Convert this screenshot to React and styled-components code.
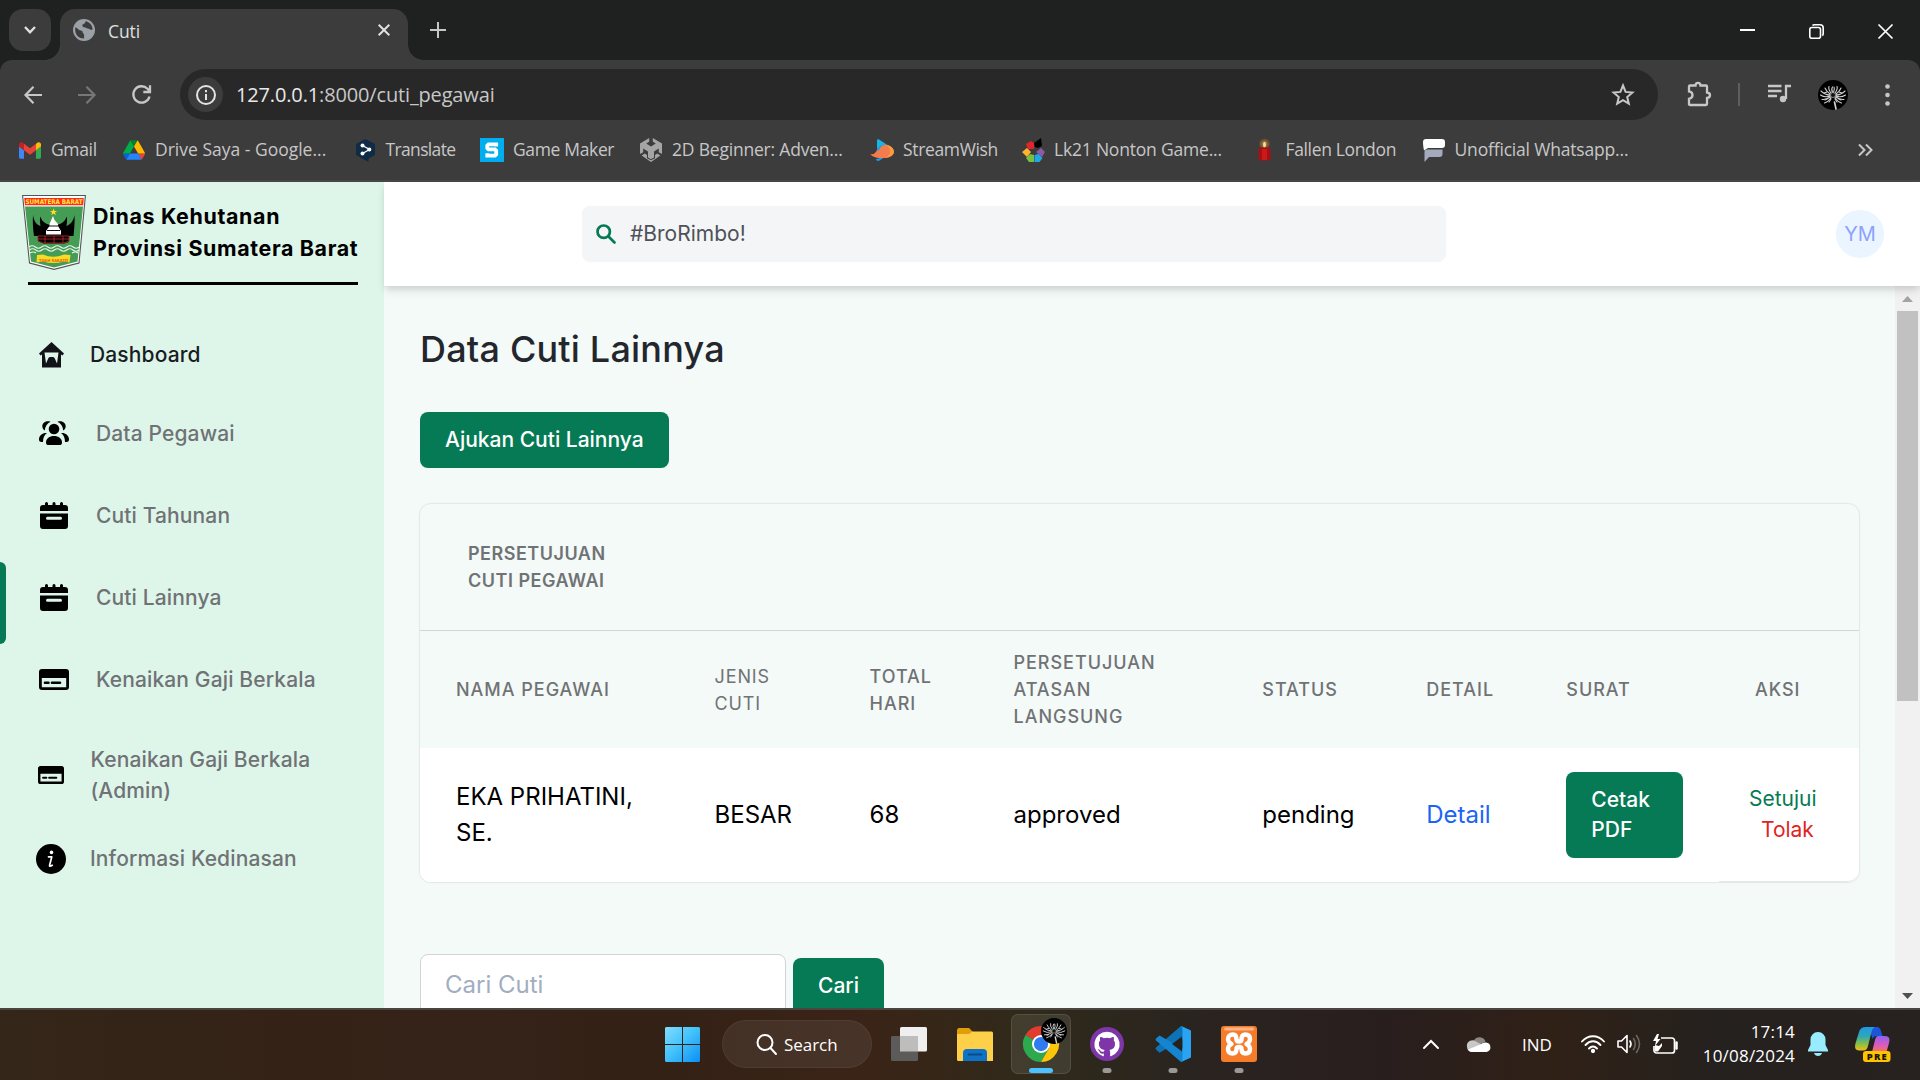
import React from "react";
import styled, { createGlobalStyle, css } from "styled-components";

const Global = createGlobalStyle`
  * { box-sizing: border-box; }
  body { margin: 0; background: #1f2120; overflow: hidden; font-family: Inter, "Liberation Sans", sans-serif; }
  svg { display: block; flex: none; overflow: visible; }
  a { text-decoration: none; color: inherit; }
  p, h1 { margin: 0; }
`;

const system = css`font-family: "Open Sans", "Noto Sans", sans-serif;`;

const Screen = styled.div`
  width: 1920px; height: 1080px; display: flex; flex-direction: column; overflow: hidden;
`;

/* ---------- Browser ---------- */
const TabStrip = styled.div`
  height: 60px; background: #1f2120; display: flex; align-items: flex-end; padding-left: 9px; flex: none;
`;
const TabSearch = styled.div`
  width: 42px; height: 42px; border-radius: 14px; background: #3c3c3c; margin-bottom: 9px;
  display: flex; align-items: center; justify-content: center;
`;
const Tab = styled.div`
  position: relative; margin-left: 9px; width: 348px; height: 51px; background: #3c3c3c;
  border-radius: 15px 15px 0 0; display: flex; align-items: center; padding: 0 18px 9px 13px;
  &::before, &::after { content: ""; position: absolute; bottom: 0; width: 15px; height: 15px; }
  &::before { left: -15px; background: radial-gradient(circle at 0 0, transparent 14.5px, #3c3c3c 15px); }
  &::after { right: -15px; background: radial-gradient(circle at 100% 0, transparent 14.5px, #3c3c3c 15px); }
`;
const TabTitle = styled.span`
  ${system} font-size: 17.5px; letter-spacing: -0.1px; color: #dfe0e0; margin-left: 13px; flex: 1; padding-top: 2px;
`;
const NewTab = styled.div`
  width: 60px; height: 60px; display: flex; align-items: center; justify-content: center; flex: none;
`;
const WindowControls = styled.div`
  margin-left: auto; display: flex; height: 58px;
`;
const WindowButton = styled.div`
  width: 69px; display: flex; align-items: center; justify-content: center;
`;
const Chrome = styled.div`
  flex: none; height: 122px; background: #3c3c3c; border-radius: 12px 12px 0 0;
  border-bottom: 2px solid #474747; display: flex; flex-direction: column;
`;
const Toolbar = styled.div`
  height: 60px; padding-top: 9px; display: flex; align-items: center;
`;
const ToolSlot = styled.div`
  width: ${(p) => p.$w}px; height: 50px; display: flex; align-items: center; justify-content: center; flex: none;
`;
const Omnibox = styled.div`
  width: 1478px; height: 51px; border-radius: 26px; background: #282828; display: flex; align-items: center;
  padding: 0 24px 0 8px; flex: none;
`;
const SiteInfo = styled.div`
  width: 35px; height: 35px; border-radius: 50%; background: #3c3c3c; display: flex; align-items: center; justify-content: center;
`;
const Url = styled.span`
  ${system} font-size: 20px; letter-spacing: -0.15px; color: #c7c7c7; margin-left: 13px; flex: 1;
  b { font-weight: 400; color: #e9e9e9; }
`;
const Bookmarks = styled.div`
  height: 60px; display: flex; align-items: center; padding-left: 19px;
`;
const Bookmark = styled.div`
  width: ${(p) => p.$w}px; display: flex; align-items: center; gap: ${(p) => p.$gap}px; flex: none;
  ${system} font-size: 17.5px; letter-spacing: ${(p) => p.$ls || 0}px; color: #c7c7c7; white-space: nowrap;
`;
const BookmarkLabel = styled.span` padding-bottom: 2px; `;
const MoreBookmarks = styled.div` margin-left: auto; margin-right: 47px; `;

/* ---------- Page ---------- */
const Page = styled.div` flex: none; height: 826px; display: flex; background: #f4faf8; `;
const Sidebar = styled.aside` width: 384px; background: #def6ea; flex: none; overflow: hidden; `;
const Brand = styled.div`
  height: 103px; padding: 13px 0 0 22px; display: flex;
`;
const BrandName = styled.div`
  margin: 5px 0 0 7px; font-size: 21.4px; line-height: 32px; letter-spacing: 0.65px; font-weight: 700; color: #000; white-space: nowrap;
  span { display: block; }
`;
const Rule = styled.div` height: 3px; width: 330px; margin: -3px 0 0 28px; background: #000; `;
const Nav = styled.nav` padding-top: 32px; display: flex; flex-direction: column; `;
const NavItem = styled.a`
  position: relative; display: flex; align-items: center; height: ${(p) => p.$h}px;
  padding-left: 36px; font-size: 21px; line-height: 31px; font-weight: 500; letter-spacing: 0.13px;
  color: ${(p) => p.$dark ? "#1a1c23" : "#707275"};
`;
const NavIcon = styled.span` width: ${(p) => p.$w}px; display: flex; justify-content: flex-start; padding-left: ${(p) => p.$pad || 0}px; flex: none; `;
const NavLabel = styled.span` width: 240px; `;
const ActiveBar = styled.span`
  position: absolute; left: 0; top: 6px; width: 6px; height: 82px; background: #057a55; border-radius: 0 6px 6px 0;
`;
const Main = styled.div` flex: 1; display: flex; flex-direction: column; min-width: 0; `;
const Header = styled.header`
  height: 104px; background: #fff; flex: none; display: flex; align-items: center; padding: 0 36px 0 198px;
  justify-content: space-between; z-index: 1; box-shadow: 0 6px 9px -1px rgba(0,0,0,.1), 0 3px 6px -1px rgba(0,0,0,.08);
`;
const SearchBox = styled.div`
  width: 864px; height: 56px; border-radius: 8px; background: #f4f5f7; display: flex; align-items: center; padding: 0 14px; gap: 14px;
  font-size: 21px; color: #4f5158;
`;
const SearchText = styled.span` padding-bottom: 1px; `;
const Initials = styled.div`
  width: 48px; height: 48px; border-radius: 50%; background: #ebf5ff; color: #8da2fb; font-size: 20px;
  display: flex; align-items: center; justify-content: center;
`;
const Body = styled.div` flex: 1; display: flex; min-height: 0; `;
const Content = styled.main`
  width: 1511px; padding: 36px 34px 0 36px; overflow: hidden; flex: none;
`;
const Scrollbar = styled.div`
  flex: 1; background: #f1f1f1; display: flex; flex-direction: column; align-items: center;
`;
const ScrollEnd = styled.div` height: 25px; display: flex; align-items: center; justify-content: center; flex: none; `;
const Thumb = styled.div` width: 21px; height: 390px; background: #c1c1c1; `;
const Track = styled.div` flex: 1; `;
const Title = styled.h1` font-size: 36px; line-height: 54px; font-weight: 500; letter-spacing: 0.2px; color: #24262d; `;
const Button = styled.button`
  font: 500 21px/30px Inter, sans-serif; color: #fff; background: #057a55; border: 0; border-radius: 8px;
  padding: 13px 25px; text-align: left; display: block; width: ${(p) => p.$w}px; flex: none; white-space: nowrap;
`;
const Toolrow = styled.div` margin-top: 36px; `;
const Card = styled.section`
  margin: 35px 0 0 -1px; width: 1441px; height: 380px; border: 1px solid #e4eae9; border-radius: 12px; overflow: hidden;
  box-shadow: 0 0 1px rgba(0,0,0,.08);
`;
const Caption = styled.div`
  height: 127px; border-bottom: 1px solid #d0d5d5; padding: 36px 48px; font-size: 18px; line-height: 27px; font-weight: 600;
  letter-spacing: 0.5px; color: #707275;
`;
const Row = styled.div`
  display: grid; grid-template-columns: 258.5px 155px 144px 248.8px 164px 140px 188.7px 1fr; height: ${(p) => p.$h}px;
  align-items: center; background: ${(p) => p.$bg || "transparent"};
`;
const HeadCell = styled.div`
  padding-left: 36px; font-size: 18px; line-height: 27px; letter-spacing: ${(p) => p.$light ? 0.9 : 0.98}px; color: #707275;
  font-weight: ${(p) => p.$light ? 400 : 500};
  span { display: block; }
`;
const Cell = styled.div`
  padding-left: 36px; font-size: 24px; line-height: 36px; color: ${(p) => p.$blue ? "#1c64f2" : "#000"};
`;
const ActionCell = styled.div`
  align-self: stretch; border-bottom: 1px solid #e4e7e7; border-radius: 0 0 12px 0; padding: 35px 0 0 30px; font-size: 21px; line-height: 31px;
`;
const Action = styled.a` display: block; color: ${(p) => p.$red ? "#e02424" : "#057a55"}; padding-left: ${(p) => p.$red ? 12 : 0}px; `;
const Finder = styled.div` display: flex; margin-top: 71px; gap: 7px; `;
const Field = styled.div`
  width: 366px; height: 62px; border: 1px solid #d0d4d8; border-radius: 8px; background: #fff; color: #a0aec0;
  font-size: 24px; line-height: 60px; padding-left: 24px;
`;
const FindButton = styled(Button)` margin-top: 4px; padding-top: 12px; padding-bottom: 14px; `;

/* ---------- Taskbar ---------- */
const Taskbar = styled.div`
  height: 72px; flex: none; border-top: 2px solid #4a4541; padding-bottom: 2px; display: flex; align-items: center; color: #fff; ${system}
  background: linear-gradient(90deg, #342618 0%, #342216 15%, #35231a 25%, #332115 33%, #3a2417 45%, #2f2a1a 54%, #2a2420 62%, #291e1e 72%, #302117 81%, #25211e 89%, #27211f 100%);
`;
const TaskSlot = styled.div`
  position: relative; width: ${(p) => p.$w}px; height: 60px; display: flex; align-items: center; justify-content: center; flex: none;
  border-radius: 7px;
  ${(p) => p.$on && css`background: rgba(255,255,255,.09); border: 1px solid rgba(255,255,255,.1);`}
`;
const Indicator = styled.span`
  position: absolute; bottom: ${(p) => p.$on ? 0 : 1}px; left: 50%; transform: translateX(-50%); height: 5px; border-radius: 3px;
  width: ${(p) => p.$on ? 24 : 9}px; background: ${(p) => p.$on ? "#4cc2ff" : "#9b9895"};
`;
const Badge = styled.span` position: absolute; right: 3px; top: 3px; `;
const SearchPill = styled.div`
  width: 150px; height: 48px; border-radius: 24px; background: rgba(255,255,255,.07); border: 1px solid rgba(255,255,255,.05);
  display: flex; align-items: center; padding-left: 33px; gap: 7px; font-size: 17px; letter-spacing: -0.05px; margin-right: 7px;
`;
const Tray = styled.div` margin-left: auto; display: flex; align-items: center; `;
const TrayItem = styled.div`
  width: ${(p) => p.$w}px; display: flex; justify-content: center; align-items: center; font-size: 17px; flex: none;
`;
const CopilotSlot = styled(TrayItem)` padding-right: 3px; `;
const Clock = styled.div`
  width: 102px; text-align: right; font-size: 17px; line-height: 24px; letter-spacing: 0.2px; margin-right: 13px; white-space: nowrap;
`;

/* ---------- Icons ---------- */
const Line = ({ w = 20, h = w, box, color = "#c7c7c7", sw = 2, children, cap = "butt" }) => (
  <svg width={w} height={h} viewBox={box || `0 0 ${w} ${h}`} fill="none" stroke={color} strokeWidth={sw} strokeLinecap={cap}>{children}</svg>
);
const Globe = () => (
  <svg width="22" height="22" viewBox="0 0 22 22">
    <circle cx="11" cy="11" r="11" fill="#9aa0a6" />
    <path d="M2.2 8.5C4 8.6 5 10 6.2 11c1.200.9 3.400.2 3.400 2 0 1.500 1.500 1.500 1.500 3v3.500C6 19.500 2.400 16 2.200 11z" fill="#3c3c3c" />
    <path d="M12.500 2.300c-.3 1.500-.4 2.200-2 2.700-1.300.4-1.300 1.500-.8 2.400.6 1 2.300.5 3.200 1.300 1.200 1 2.600.4 3.900 1.500.9.8 2.200.6 2.900.4C19.300 6 16.400 2.900 12.500 2.300z" fill="#3c3c3c" />
  </svg>
);
const Avatar = ({ size }) => (
  <svg width={size} height={size} viewBox="0 0 30 30">
    <circle cx="15" cy="15" r="15" fill="#000" />
    <g stroke="#cfcfcf" strokeWidth="1.100" fill="none" strokeLinecap="round">
      <path d="M12 15Q7 15 3 11M12 16Q7 18 2.500 15M12.500 17Q8 20 4 19.500M13 18Q10 22 6.500 23M12 14Q8 11 7 8M13 13Q10 9 11 6.500M14.500 12.500Q13 9 14.500 7" />
      <path d="M18 15Q23 15 27 11M18 16Q23 18 27.500 15M17.500 17Q22 20 26 19.500M17 18Q20 22 23.500 23M18 14Q22 11 23 8M17 13Q20 9 19 6.500M15.500 12.500Q17 9 16 7" />
      <path d="M9 12L6 13M21 12L24 13M9 19L7 20M21 19L23 20M13 19L11 22M17 19L19 22" />
      <path d="M16.500 22L18 29" strokeWidth="1.700" />
    </g>
    <circle cx="15" cy="15" r="2.500" fill="#111" stroke="#aaa" strokeWidth=".8" />
  </svg>
);
const Gmail = () => (
  <svg width="22" height="17" viewBox="52 42 88 66">
    <path fill="#4285f4" d="M58 108h14V74L52 59v43c0 3.320 2.690 6 6 6" />
    <path fill="#34a853" d="M120 108h14c3.320 0 6-2.690 6-6V59l-20 15" />
    <path fill="#fbbc04" d="M120 48v26l20-15v-8c0-7.420-8.470-11.650-14.400-7.200" />
    <path fill="#ea4335" d="M72 74V48l24 18 24-18v26L96 92" />
    <path fill="#c5221f" d="M52 51v8l20 15V48l-5.600-4.200c-5.940-4.450-14.400-.22-14.400 7.200" />
  </svg>
);
const Drive = () => (
  <svg width="22" height="20" viewBox="0 0 87.300 78">
    <path fill="#0066da" d="m6.600 66.850 3.850 6.650c.8 1.400 1.950 2.500 3.300 3.300l13.750-23.800H0c0 1.550.4 3.100 1.200 4.500z" />
    <path fill="#00ac47" d="m43.650 25-13.750-23.800c-1.350.8-2.500 1.900-3.300 3.300L1.200 48.500A9 9 0 0 0 0 53h27.500z" />
    <path fill="#ea4335" d="M73.550 76.800c1.350-.8 2.500-1.900 3.300-3.300l1.600-2.750 7.650-13.250c.8-1.400 1.200-2.950 1.200-4.500H59.800l5.850 11.500z" />
    <path fill="#00832d" d="M43.650 25 57.400 1.200C56.050.4 54.500 0 52.900 0H34.400c-1.600 0-3.150.45-4.500 1.200z" />
    <path fill="#2684fc" d="M59.800 53H27.500L13.750 76.800c1.350.8 2.900 1.200 4.500 1.200h50.800c1.600 0 3.150-.45 4.500-1.200z" />
    <path fill="#ffba00" d="m73.400 26.500-12.700-22c-.8-1.400-1.950-2.500-3.300-3.300L43.650 25 59.800 53h27.450c0-1.550-.4-3.100-1.200-4.500z" />
  </svg>
);
const DeepL = () => (
  <svg width="19" height="23" viewBox="0 0 19 23">
    <path d="M9.500 0L19 5v11l-6.500 3.600V23L0 16V5z" fill="#0f2b46" />
    <path d="M6.500 6.500L13.500 10.500L6.500 14.500" stroke="#fff" strokeWidth="1.300" fill="none" />
    <g fill="#fff"><circle cx="6.500" cy="6.500" r="2" /><circle cx="13.300" cy="10.500" r="2" /><circle cx="6.500" cy="14.500" r="2" /></g>
  </svg>
);
const GameMaker = () => (
  <svg width="24" height="24" viewBox="0 0 24 24">
    <rect width="24" height="24" fill="#00adef" />
    <path d="M16.200 8.600V6.300H8.500L7.300 7.500V10.200L8.500 11.400H15L16.200 12.600V16.500L15 17.700H7.300V15.200" fill="none" stroke="#fff" strokeWidth="3.800" strokeLinejoin="miter" />
  </svg>
);
const Unity = () => (
  <svg width="22" height="24" viewBox="0 0 22 24" fill="#a5a5a5">
    <path d="M9.200 0V3.800L6.200 5.600L11 8.400L15.800 5.600L12.800 3.800V0L22 5.400V16L18.800 14.200V10.600L14 13.400V19.600L11 21.200L8 19.600V13.400L3.200 10.600V14.200L0 16V5.400Z" />
    <path d="M1.600 17.400L4.800 15.600L7 17V20.200L11 22.200L15 20.200V17L17.200 15.600L20.400 17.400L11 24Z" />
  </svg>
);
const StreamWish = () => (
  <svg width="24" height="22" viewBox="0 0 24 22">
    <path d="M7 1.500C7 .3 8 0 9 .6L19 7c-4-1-8-1-12 3z" fill="#19b5e6" />
    <path d="M6 20c3-1 8-1 12-4l-8.500 5.400C8 22.300 6.500 22 6 20z" fill="#1a9fe0" />
    <path d="M0 15c4 1 5.500-1 7-4 2-4 6-6 10-5 4 .8 7 4 7 7-.5 4-5 6-10 6-5 .5-11-.5-14-4z" fill="#f47b4d" />
    <path d="M16 6c4 0 8 3 8 7-.5 3-4 5-8 5.500 3-2 4.500-4 4-7-.3-2.500-2-4.500-4-5.500z" fill="#fb9d3c" />
    <path d="M7 11.500C8 6.500 12 5 15.500 6C12 6 10.500 8 9.500 10.500C9 11.500 8 12 7 11.500Z" fill="#19a5e0" />
  </svg>
);
const Lk21 = () => (
  <svg width="24" height="24" viewBox="0 0 24 24">
    <path d="M4 6l5-3 3 2v6H6z" fill="#e8222a" /><path d="M12 5l7-5 1 8-4 2-3-1z" fill="#000" />
    <path d="M0 14l5-4 4 4-4 5z" fill="#fdb52b" /><path d="M14 14l5-4 4 4-3 5z" fill="#8d5ba6" />
    <path d="M4 20l4-4 4 1v7H7z" fill="#78bf43" /><path d="M12.500 17l4-1 4 4-3 4h-5z" fill="#1fa9e4" />
  </svg>
);
const Candle = () => (
  <svg width="13" height="22" viewBox="0 0 13 22">
    <defs><radialGradient id="glow"><stop stopColor="#c98a3c" /><stop offset="1" stopColor="#c98a3c" stopOpacity="0" /></radialGradient></defs>
    <circle cx="6.500" cy="5" r="6" fill="url(#glow)" /><rect x=".5" y="8.500" width="12" height="13" rx="2" fill="#a80f12" />
    <ellipse cx="6.500" cy="5.500" rx="1.500" ry="2.800" fill="#ffd88c" /><rect x="4" y="10" width="5" height="11" fill="#c81a1a" />
  </svg>
);
const Chat = () => (
  <svg width="22" height="23" viewBox="0 0 22 23">
    <path d="M3 0H19a3 3 0 0 1 3 3V6a3 3 0 0 1-3 3H5L1 11.500C.3 8 0 5 0 3a3 3 0 0 1 3-3z" fill="#fff" />
    <path d="M4 10.500H19.500V15a3 3 0 0 1-3 3H6L1.500 23V13a2.500 2.500 0 0 1 2.500-2.500z" fill="#a4abbd" />
  </svg>
);
const Crest = () => (
  <svg width="64" height="75" viewBox="0 0 64 75">
    <path d="M0 0H64L57.500 68.500L32 75L7 68.500Z" fill="#555" />
    <path d="M1.200 1H62.800L56.500 67.500L32 73.800L8 67.500Z" fill="#fff" />
    <path d="M3 11.500H61L55.500 66.500L32 72.500L9 66.500Z" fill="#459c55" />
    <path d="M2.200 3H61.800L61.200 10.300H3Z" fill="#ff2a1c" />
    <text x="32" y="9.200" fontFamily="DejaVu Sans" fontWeight="700" fontSize="6.400" textAnchor="middle" textLength="57" lengthAdjust="spacingAndGlyphs" fill="#ffe93b">SUMATERA BARAT</text>
    <path d="M31.500 13.500l1 2.500h2.600l-2.100 1.600.8 2.600-2.300-1.600-2.200 1.600.7-2.600-2-1.600h2.600z" fill="#ffe01a" />
    <path d="M11 20C12 27 15 30 18.500 31C18 27 17.500 24 18.500 21.500C20 27 24 30 31.500 30C39 30 43 27 44.500 21.500C45.500 24 45 27 44.500 31C49 29 51.500 26 52.500 20C53 27 52 35 51.500 41H47V47L42 48.500H21.500L16 46.500V41H12C11 34 10.500 27 11 20Z" fill="#000" />
    <path d="M31 21L32.500 25L36 29V31L39 36V39.500H24V36L27.500 31V29Z" fill="#fff" />
    <path d="M27 31H36M25 35.500H38" stroke="#111" strokeWidth="1" />
    <path d="M16 41H47V46L42 48H21.500L16 46ZM16 44H47M23 41V48M32 41V48M41 41V48" fill="none" stroke="#b3222b" strokeWidth=".9" />
    <g fill="none" stroke="#e9f7ec" strokeWidth="1.100">
      <path d="M7 52q3.200-2.500 6.300 0t6.300 0t6.300 0t6.300 0t6.300 0t6.300 0t6.300 0t6.300 0" />
      <path d="M7.500 55q3.200-2.500 6.200 0t6.200 0t6.200 0t6.200 0t6.200 0t6.200 0t6.200 0t6.200 0" />
      <path d="M8 58q3-2 6 0M50 58q3-2 6 0" />
    </g>
    <path d="M15 60L21 59.500Q31 64 42 59.500L48.500 60L47.500 67.500L42 66.500Q31 69.500 21 66.500L14.500 67.500Z" fill="#f8dc22" />
    <text x="31.500" y="66.500" fontFamily="DejaVu Sans" fontWeight="700" fontSize="4.300" textAnchor="middle" textLength="29" lengthAdjust="spacingAndGlyphs" fill="#e5641c">TUAH SAKATO</text>
  </svg>
);
const Home = () => (
  <svg width="25" height="26" viewBox="0 0 25 26">
    <path d="M12.500 0L25 11.500L23.500 13.500L22 12.500V25.500H3V12.500L1.500 13.500L0 11.500Z" fill="#111319" />
    <path d="M5.500 10.500H19.500L18 21.500L15.800 16.500A2 2 0 0 0 14 15H11A2 2 0 0 0 9.200 16.500L7 21.500Z" fill="#def6ea" />
  </svg>
);
const Users = () => (
  <svg width="30" height="24" viewBox="0 0 30 24" fill="#000">
    <circle cx="15" cy="8" r="5.300" />
    <path d="M7 21.500C7 17.500 10.500 15 15 15s8 2.500 8 6.500C23 23.400 22 24 20.500 24h-11C8 24 7 23.400 7 21.500Z" />
    <path d="M11.500 .7C8 -.8 3.500 1.200 3.300 5c0 2 1 3.600 2.500 4.500C6 5.500 8 2.500 11.500 .7ZM18.500 .7C22 -.8 26.500 1.200 26.700 5c0 2-1 3.600-2.500 4.500C24 5.500 22 2.500 18.500 .7Z" />
    <path d="M8 12C4 11.500 0 14 0 18.500c0 1.700 1 2.500 2.500 2.500H4c0-4.500 1.500-7.500 4-9ZM22 12c4-.5 8 2 8 6.500 0 1.700-1 2.500-2.500 2.500H26c0-4.500-1.500-7.500-4-9Z" />
  </svg>
);
const Calendar = () => (
  <svg width="28" height="27" viewBox="0 0 28 27">
    <path d="M5 3V1.500a1.500 1.500 0 0 1 3 0V3h4.500V1.500a1.500 1.500 0 0 1 3 0V3H20V1.500a1.500 1.500 0 0 1 3 0V3h2a3 3 0 0 1 3 3v3H0V6a3 3 0 0 1 3-3Z" fill="#000" />
    <path d="M0 11.500H28V24a3 3 0 0 1-3 3H3a3 3 0 0 1-3-3ZM7.500 14.800a1.400 1.400 0 0 0 0 3h13a1.400 1.400 0 0 0 0-3Z" fillRule="evenodd" fill="#000" />
  </svg>
);
const CardIcon = ({ w, h }) => (
  <svg width={w} height={h} viewBox="0 0 30 21" preserveAspectRatio="none">
    <path d="M3 0H27a3 3 0 0 1 3 3V18a3 3 0 0 1-3 3H3a3 3 0 0 1-3-3V3a3 3 0 0 1 3-3ZM2.800 9V18.200H27.200V9Z" fillRule="evenodd" fill="#000" />
    <path d="M6 13.700H9.500M13 13.700H21" stroke="#000" strokeWidth="2.600" strokeLinecap="round" />
  </svg>
);
const Info = () => (
  <svg width="30" height="30" viewBox="0 0 30 30">
    <circle cx="15" cy="15" r="15" fill="#000" />
    <circle cx="15.500" cy="8.400" r="1.800" fill="#fff" />
    <path d="M12.500 12.800H15.800L13.600 21.300Q13.300 23.200 16.300 21.300" fill="none" stroke="#fff" strokeWidth="1.700" strokeLinecap="round" strokeLinejoin="round" />
  </svg>
);
const Windows = () => (
  <svg width="35" height="35" viewBox="0 0 35 35">
    <defs><linearGradient id="win" x1="0" y1="0" x2="35" y2="35" gradientUnits="userSpaceOnUse"><stop stopColor="#82dcff" /><stop offset=".45" stopColor="#45c4fb" /><stop offset="1" stopColor="#0a8ff5" /></linearGradient></defs>
    <path d="M1 0H17V17H0V1ZM18 0H34L35 1V17H18ZM0 18H17V35H1L0 34ZM18 18H35V34L34 35H18Z" fill="url(#win)" />
  </svg>
);
const TaskView = () => (
  <svg width="36" height="34" viewBox="0 0 36 34">
    <rect x="9" width="27" height="24.500" rx="1.500" fill="#efefef" />
    <rect y="9" width="27" height="25" rx="1.500" fill="#5d5b5a" />
    <path d="M9 9H27V24.500H9Z" fill="#bdbdbd" />
  </svg>
);
const Folder = () => (
  <svg width="36" height="33" viewBox="0 0 36 33">
    <path d="M1.500 0H12l3.500 3.500V8H0V1.500Z" fill="#e09f08" />
    <path d="M0 6H12L15.500 3.500H34.500A1.500 1.500 0 0 1 36 5V33H1.500A1.500 1.500 0 0 1 0 31.500Z" fill="#fed049" />
    <path d="M6 33V25a4 4 0 0 1 4-4H26a4 4 0 0 1 4 4V33Z" fill="#0f72c4" />
    <path d="M11.500 26.500H24.500" stroke="#0a4a87" strokeWidth="2" strokeLinecap="round" />
  </svg>
);
const ChromeLogo = () => (
  <svg width="36" height="36" viewBox="0 0 48 48">
    <path d="M24 24L3.200 12A24 24 0 0 1 44.800 12H24Z" fill="#e33b2e" />
    <path d="M24 24L3.200 12A24 24 0 0 0 24 48L34.400 30Z" fill="#2da94f" />
    <path d="M24 12H44.800A24 24 0 0 1 24 48L34.400 30Z" fill="#fdc60a" />
    <circle cx="24" cy="24" r="12" fill="#fff" /><circle cx="24" cy="24" r="9.500" fill="#2f7cf0" />
  </svg>
);
const GithubDesktop = () => (
  <svg width="34" height="34" viewBox="0 0 34 34">
    <circle cx="17" cy="17" r="17" fill="#7d35a8" />
    <g transform="translate(4.400 4.400) scale(1.050)"><path fill="#fff" d="M12 .3a12 12 0 0 0-3.800 23.400c.6.100.8-.3.800-.6v-2c-3.300.7-4-1.600-4-1.600-.6-1.400-1.400-1.800-1.400-1.800-1-.7.100-.7.100-.7 1.200 0 1.900 1.200 1.900 1.200 1 1.800 2.800 1.300 3.500 1 0-.8.400-1.300.7-1.600-2.700-.3-5.500-1.300-5.500-6 0-1.200.5-2.300 1.300-3.100-.2-.4-.6-1.600 0-3.200 0 0 1-.3 3.400 1.200a11.500 11.500 0 0 1 6 0c2.300-1.500 3.300-1.200 3.300-1.200.6 1.600.2 2.800 0 3.200.9.800 1.300 1.900 1.300 3.200 0 4.600-2.800 5.600-5.500 5.900.5.400.9 1 .9 2.200v3.300c0 .3.100.7.800.6A12 12 0 0 0 12 .3" /></g>
  </svg>
);
const VsCode = () => (
  <svg width="36" height="36" viewBox="0 0 36 36">
    <path d="M26 0L35 4.300V9L4.500 26.800L1 23.500Q0 22.500 1 21.500Z" fill="#0d73b8" />
    <path d="M26 36L35 31.500V27L4.500 9.500L1 12.500Q0 13.500 1 14.500Z" fill="#1585cf" />
    <path d="M26 0L36 4.500V31.500L26 36Q27.500 35 27.500 33V3Q27.500 1 26 0Z" fill="#29a3f2" />
    <path d="M27 10.500V25.500L17 18Z" fill="#24211f" />
  </svg>
);
const Xampp = () => (
  <svg width="36" height="36" viewBox="0 0 36 36">
    <rect width="36" height="36" rx="3" fill="#f57c2a" /><rect x="3" y="1.500" width="30" height="3" rx="1.500" fill="#f9b48a" />
    <path d="M12 8.500C15 8.500 15.500 11 15.500 13.500Q15.500 15.500 18 15.500T20.500 13.500C20.500 11 21 8.500 24 8.500C27.500 8.500 29 10.500 29 13C29 16 27.500 17 25.500 18C27.500 19 29 20 29 23C29 26 27.500 27.500 24.500 27.500C21.500 27.500 20.500 25.500 20.500 23Q20.500 21 18 21T15.500 23C15.500 25.500 14.500 27.500 11.500 27.500C8.500 27.500 7 26 7 23C7 20 8.500 19 10.500 18C8.500 17 7 16 7 13C7 10.500 8.500 8.500 12 8.500Z" fill="none" stroke="#fff" strokeWidth="4.400" strokeLinejoin="round" />
  </svg>
);
const Cloud = () => (
  <svg width="24" height="16" viewBox="0 0 24 16">
    <path d="M7 4.500A6.300 6.300 0 0 1 18.500 5.500L12 9Z" fill="#8d8986" />
    <path d="M0 11A5.600 5.600 0 0 1 9 5.500L19 11 5 16A5 5 0 0 1 0 11Z" fill="#c9c8c7" />
    <path d="M14 8.300a5.500 5.500 0 0 1 5-1.800A4.800 4.800 0 0 1 19.500 16H5C3 16 1.500 15 1 13.500Z" fill="#fff" />
  </svg>
);
const Wifi = () => (
  <Line w={24} h={18} color="#fff" sw={1.9} cap="round">
    <path d="M1 6.500C7-.5 17-.5 23 6.500M4.500 10c4.500-5 10.500-5 15 0M8 13.500c2.500-2.600 5.500-2.600 8 0" /><circle cx="12" cy="16" r="1.200" fill="#fff" />
  </Line>
);
const Volume = () => (
  <Line w={24} h={20} color="#fff" sw={1.6} cap="round">
    <path d="M1 7H4.500L10 1.500V18.500L4.500 13H1Z" strokeLinejoin="round" /><path d="M13 7Q15 10 13 13" />
    <path d="M16.500 4.500Q20 10 16.500 15.500M19.500 1.500Q25.500 10 19.500 18.500" stroke="#6b6662" />
  </Line>
);
const Battery = () => (
  <Line w={25} h={20} color="#fff" sw={1.7}>
    <path d="M8 4H19a2.500 2.500 0 0 1 2.500 2.500V16.500A2.500 2.500 0 0 1 19 19H3.500A2.500 2.500 0 0 1 1 16.500V12" />
    <path d="M23.500 8.500V14.500" strokeWidth="2.500" strokeLinecap="round" />
    <path d="M2 17.500V11L6 12 9 9V12L5 17.500Z" fill="#fff" stroke="none" /><path d="M4 0L0 7H3L2 12L7.500 5H4.500L6 0Z" fill="#fff" stroke="none" />
  </Line>
);
const Bell = () => (
  <svg width="20" height="24" viewBox="0 0 20 24">
    <path d="M10 0A7.300 7.300 0 0 1 17.500 7.500V13L20 18V19.500H0V18L2.500 13V7.500A7.300 7.300 0 0 1 10 0Z" fill="#99ebff" />
    <path d="M6 21H14Q13 24 10 24T6 21Z" fill="#99ebff" />
  </svg>
);
const Copilot = () => (
  <svg width="36" height="35" viewBox="0 0 36 35">
    <defs>
      <linearGradient id="cpA" x1="0" y1="0" x2="0" y2="1"><stop stopColor="#1c9ae8" /><stop offset=".4" stopColor="#30a7b4" /><stop offset=".75" stopColor="#8fc23c" /><stop offset="1" stopColor="#f3bb1b" /></linearGradient>
      <linearGradient id="cpB" x1="0" y1="0" x2="0" y2="1"><stop stopColor="#8c63ee" /><stop offset=".5" stopColor="#d35ac8" /><stop offset="1" stopColor="#f7745c" /></linearGradient>
    </defs>
    <path d="M16 0H22Q25 0 26 4L27.500 9H22Q18.500 9 17.500 12L14 0Z" fill="#1c55d8" />
    <path d="M10.500 0H20Q17.500 1 16.500 5L13 19Q12 23.500 8 23.500H4Q-1 23.500 .3 17L4 5Q5.500 0 10.500 0Z" fill="url(#cpA)" />
    <path d="M23 9H30Q36 9 34 16L31.500 25H17L20 13Q21 9 23 9Z" fill="url(#cpB)" />
    <rect x="8" y="24" width="27.500" height="11" rx="3" fill="#ffc400" />
    <text x="21.700" y="32.900" fontFamily="Open Sans" fontWeight="800" fontSize="9.500" textAnchor="middle" textLength="20" fill="#1b1500">PRE</text>
  </svg>
);

const bookmarks = [
  { icon: <Gmail />, label: "Gmail", w: 104, gap: 10, ls: -0.35 },
  { icon: <Drive />, label: "Drive Saya - Google...", w: 232.5, gap: 10, ls: 0 },
  { icon: <DeepL />, label: "Translate", w: 124.5, gap: 11, ls: -0.65 },
  { icon: <GameMaker />, label: "Game Maker", w: 160, gap: 9, ls: -0.35 },
  { icon: <Unity />, label: "2D Beginner: Adven...", w: 230, gap: 10, ls: -0.2 },
  { icon: <StreamWish />, label: "StreamWish", w: 152, gap: 9, ls: -0.35 },
  { icon: <Lk21 />, label: "Lk21 Nonton Game...", w: 235.5, gap: 8, ls: -0.2 },
  { icon: <Candle />, label: "Fallen London", w: 165, gap: 15, ls: -0.35 },
  { icon: <Chat />, label: "Unofficial Whatsapp...", w: 220, gap: 10, ls: -0.18 },
];

const menu = [
  { label: "Dashboard", icon: <Home />, h: 75, w: 54, pad: 2.5, dark: true },
  { label: "Data Pegawai", icon: <Users />, h: 82, w: 60, pad: 3 },
  { label: "Cuti Tahunan", icon: <Calendar />, h: 82, w: 60, pad: 4 },
  { label: "Cuti Lainnya", icon: <Calendar />, h: 82, w: 60, pad: 4, active: true },
  { label: "Kenaikan Gaji Berkala", icon: <CardIcon w={30} h={21} />, h: 82, w: 60, pad: 3 },
  { label: "Kenaikan Gaji Berkala (Admin)", icon: <CardIcon w={26} h={18} />, h: 109, w: 54.5, pad: 2 },
  { label: "Informasi Kedinasan", icon: <Info />, h: 59, w: 54, pad: 0 },
];

const heads = [["NAMA PEGAWAI"], ["JENIS", "CUTI"], ["TOTAL", "HARI"], ["PERSETUJUAN", "ATASAN", "LANGSUNG"], ["STATUS"], ["DETAIL"], ["SURAT"], ["AKSI"]];

const BrowserFrame = () => (
  <>
    <TabStrip>
      <TabSearch><Line w={12} h={8} color="#e0e0e0" sw={2.4}><path d="M1 1L6 6.300L11 1" /></Line></TabSearch>
      <Tab>
        <Globe />
        <TabTitle>Cuti</TabTitle>
        <Line w={12} color="#e0e0e0" sw={2}><path d="M.7 .7L11.300 11.300M11.300 .7L.7 11.300" /></Line>
      </Tab>
      <NewTab><Line w={16} color="#c7c7c7" sw={2}><path d="M8 0V16M0 8H16" /></Line></NewTab>
      <WindowControls>
        <WindowButton><Line w={15} h={2} color="#fff"><path d="M0 0H15" /></Line></WindowButton>
        <WindowButton>
          <Line w={15} color="#fff" sw={1.6}><rect x=".8" y="3.500" width="10.700" height="10.700" rx="2" /><path d="M3.500 1.500Q4 .8 5.500 .8H11Q14.200 .8 14.200 4V9.500Q14.200 11 13.300 11.700" /></Line>
        </WindowButton>
        <WindowButton><Line w={15} color="#fff" sw={1.7}><path d="M.5 .5L14.500 14.500M14.500 .5L.5 14.500" /></Line></WindowButton>
      </WindowControls>
    </TabStrip>
    <Chrome>
      <Toolbar>
        <ToolSlot $w={66}><Line w={18} sw={2.2}><path d="M18 9H2M9.500 .8L1.500 9L9.500 17.200" /></Line></ToolSlot>
        <ToolSlot $w={42}><Line w={18} sw={2.2} color="#777"><path d="M0 9H16M8.500 .8L16.500 9L8.500 17.200" /></Line></ToolSlot>
        <ToolSlot $w={66}><Line w={19} sw={2.3}><path d="M17.500 11.500A8.200 8.200 0 1 1 15.500 3.800L17.500 6M18 .3V7H11.300" /></Line></ToolSlot>
        <ToolSlot $w={6} />
        <Omnibox>
          <SiteInfo><Line w={20} color="#e3e3e3" sw={2}><circle cx="10" cy="10" r="9" /><path d="M10 9V15M10 5V7.200" /></Line></SiteInfo>
          <Url><b>127.0.0.1</b>:8000/cuti_pegawai</Url>
          <Line w={22} box="0 0 22 22" sw={2}><path d="M11 1.500L13.600 7.900L20.400 8.500L15.200 13L16.800 19.700L11 16.100L5.200 19.700L6.800 13L1.600 8.500L8.400 7.900Z" /></Line>
        </Omnibox>
        <ToolSlot $w={82}>
          <Line w={24} h={25} sw={2.3}><path d="M2 4.500Q2 3.500 3 3.500H8.500Q8.500 .8 11 .8T13.500 3.500H19Q20 3.500 20 4.500V10.500Q23 10.800 23 13.300T20 16V22Q20 23 19 23H3Q2 23 2 22V16.800Q5.500 16.300 5.500 13.100T2 9.400Z" /></Line>
        </ToolSlot>
        <ToolSlot $w={0}><Line w={2} h={23} color="#5e5e5e"><path d="M0 0V23" /></Line></ToolSlot>
        <ToolSlot $w={78}>
          <Line w={23} h={19} sw={2.3}><path d="M0 1H13.500M0 6H13.500M0 11H9M18 14V1H23" /><circle cx="15" cy="14" r="3.200" fill="#c7c7c7" stroke="none" /></Line>
        </ToolSlot>
        <ToolSlot $w={30}><Avatar size={30} /></ToolSlot>
        <ToolSlot $w={78}>
          <svg width="5" height="22" viewBox="0 0 5 22" fill="#c7c7c7"><circle cx="2.500" cy="2.500" r="2.300" /><circle cx="2.500" cy="11" r="2.300" /><circle cx="2.500" cy="19.500" r="2.300" /></svg>
        </ToolSlot>
      </Toolbar>
      <Bookmarks>
        {bookmarks.map((b) => (
          <Bookmark key={b.label} $w={b.w} $gap={b.gap} $ls={b.ls}>{b.icon}<BookmarkLabel>{b.label}</BookmarkLabel></Bookmark>
        ))}
        <MoreBookmarks><Line w={15} h={12} sw={2}><path d="M1 .5L6.500 6L1 11.500M8 .5L13.500 6L8 11.500" /></Line></MoreBookmarks>
      </Bookmarks>
    </Chrome>
  </>
);

const SideMenu = () => (
  <Sidebar>
    <Brand>
      <Crest />
      <BrandName><span>Dinas Kehutanan</span><span>Provinsi Sumatera Barat</span></BrandName>
    </Brand>
    <Rule />
    <Nav>
      {menu.map((m) => (
        <NavItem key={m.label} $h={m.h} $dark={m.dark}>
          {m.active && <ActiveBar />}
          <NavIcon $w={m.w} $pad={m.pad}>{m.icon}</NavIcon>
          <NavLabel>{m.label}</NavLabel>
        </NavItem>
      ))}
    </Nav>
  </Sidebar>
);

const Dashboard = () => (
  <Page>
    <SideMenu />
    <Main>
      <Header>
        <SearchBox>
          <Line w={20} color="#057a55" sw={2.7} cap="round"><circle cx="7.700" cy="7.700" r="6.200" /><path d="M12.500 12.500L18.500 18.500" /></Line>
          <SearchText>#BroRimbo!</SearchText>
        </SearchBox>
        <Initials>YM</Initials>
      </Header>
      <Body>
        <Content>
          <Title>Data Cuti Lainnya</Title>
          <Toolrow><Button $w={249}>Ajukan Cuti Lainnya</Button></Toolrow>
          <Card>
            <Caption>PERSETUJUAN<br />CUTI PEGAWAI</Caption>
            <Row $h={117}>
              {heads.map((lines, i) => (
                <HeadCell key={i} $light={i === 1}>{lines.map((l) => <span key={l}>{l}</span>)}</HeadCell>
              ))}
            </Row>
            <Row $h={134} $bg="#fff">
              <Cell>EKA PRIHATINI,<br />SE.</Cell>
              <Cell>BESAR</Cell>
              <Cell>68</Cell>
              <Cell>approved</Cell>
              <Cell>pending</Cell>
              <Cell $blue>Detail</Cell>
              <Cell><Button $w={117}>Cetak<br />PDF</Button></Cell>
              <ActionCell><Action>Setujui</Action><Action $red>Tolak</Action></ActionCell>
            </Row>
          </Card>
          <Finder>
            <Field>Cari Cuti</Field>
            <FindButton $w={91}>Cari</FindButton>
          </Finder>
        </Content>
        <Scrollbar>
          <ScrollEnd><svg width="11" height="6"><path d="M0 6L5.500 0L11 6Z" fill="#a3a3a3" /></svg></ScrollEnd>
          <Thumb />
          <Track />
          <ScrollEnd><svg width="11" height="6"><path d="M0 0L5.500 6L11 0Z" fill="#505050" /></svg></ScrollEnd>
        </Scrollbar>
      </Body>
    </Main>
  </Page>
);

const Desktop = () => (
  <Taskbar>
    <TaskSlot $w={643} />
    <TaskSlot $w={79}><Windows /></TaskSlot>
    <SearchPill>
      <Line w={21} color="#fff" sw={2} cap="round"><circle cx="9" cy="8.500" r="7.500" /><path d="M14.500 14L20 20" /></Line>
      <span>Search</span>
    </SearchPill>
    <TaskSlot $w={60}><TaskView /></TaskSlot>
    <TaskSlot $w={72}><Folder /></TaskSlot>
    <TaskSlot $w={60} $on><ChromeLogo /><Badge><Avatar size={26} /></Badge><Indicator $on /></TaskSlot>
    <TaskSlot $w={72}><GithubDesktop /><Indicator /></TaskSlot>
    <TaskSlot $w={60}><VsCode /><Indicator /></TaskSlot>
    <TaskSlot $w={72}><Xampp /><Indicator /></TaskSlot>
    <Tray>
      <TrayItem $w={36}><Line w={16} h={9} color="#fff" sw={2} cap="round"><path d="M1 8L8 1L15 8" /></Line></TrayItem>
      <TrayItem $w={60}><Cloud /></TrayItem>
      <TrayItem $w={56}>IND</TrayItem>
      <TrayItem $w={56}><Wifi /></TrayItem>
      <TrayItem $w={16}><Volume /></TrayItem>
      <TrayItem $w={56}><Battery /></TrayItem>
      <Clock>17:14<br />10/08/2024</Clock>
      <TrayItem $w={20}><Bell /></TrayItem>
      <CopilotSlot $w={92}><Copilot /></CopilotSlot>
    </Tray>
  </Taskbar>
);

export default function App() {
  return (
    <Screen>
      <Global />
      <BrowserFrame />
      <Dashboard />
      <Desktop />
    </Screen>
  );
}
